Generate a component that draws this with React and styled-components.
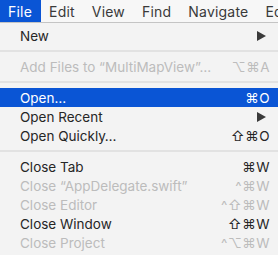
import React from "react";
import styled, { createGlobalStyle } from "styled-components";

const GlobalStyle = createGlobalStyle`
  html, body {
    margin: 0;
    padding: 0;
    background: #f3f3f3;
  }
  body {
    font-family: Inter, "Noto Sans", "DejaVu Sans", sans-serif;
    -webkit-font-smoothing: antialiased;
  }
`;

const Screen = styled.div`
  width: 278px;
  height: 255px;
  overflow: hidden;
  background: #f3f3f3;
`;

const MenuBar = styled.div`
  display: flex;
  height: 22px;
  background: #f7f7f7;
  border-bottom: 1px solid #c4c4c4;
  white-space: nowrap;
  overflow: hidden;
`;

const BarItem = styled.div`
  display: flex;
  align-items: center;
  flex-shrink: 0;
  padding: 0 9px 0 8px;
  height: 22px;
  font-size: 14px;
  letter-spacing: 0.2px;
  color: ${p => (p.$active ? "#fff" : "#3a3a3a")};
  background: ${p => (p.$active ? "#0a55d5" : "transparent")};
`;

const Menu = styled.div`
  display: flex;
  flex-direction: column;
  padding-top: 3px;
`;

const Row = styled.div`
  display: flex;
  align-items: center;
  justify-content: space-between;
  height: 19px;
  padding: 0 8px 0 20px;
  font-size: 13.5px;
  color: ${p => (p.$selected ? "#fff" : p.$disabled ? "#bcbcbc" : "#262626")};
  background: ${p => (p.$selected ? "#0a55d5" : "transparent")};
  white-space: nowrap;
`;

const Shortcut = styled.span`
  letter-spacing: 0.5px;
`;

const Arrow = styled.span`
  width: 0;
  height: 0;
  margin-right: 4px;
  border-top: 5px solid transparent;
  border-bottom: 5px solid transparent;
  border-left: 9px solid #3a3a3a;
`;

const Separator = styled.div`
  height: 12px;
  display: flex;
  align-items: center;

  &::after {
    content: "";
    flex: 1;
    height: 2px;
    background: #e2e2e2;
  }
`;

const menus = ["File", "Edit", "View", "Find", "Navigate", "Ed"];

const items = [
  { label: "New", arrow: true },
  "sep",
  { label: "Add Files to \u201CMultiMapView\u201D\u2026", key: "\u2325\u2318A", disabled: true },
  "sep",
  { label: "Open\u2026", key: "\u2318O", selected: true },
  { label: "Open Recent", arrow: true },
  { label: "Open Quickly\u2026", key: "\u21E7\u2318O" },
  "sep",
  { label: "Close Tab", key: "\u2318W" },
  { label: "Close \u201CAppDelegate.swift\u201D", key: "^\u2318W", disabled: true },
  { label: "Close Editor", key: "^\u21E7\u2318W", disabled: true },
  { label: "Close Window", key: "\u21E7\u2318W" },
  { label: "Close Project", key: "^\u2325\u2318W", disabled: true }
];

const App = () => {
  return (
    <Screen>
      <GlobalStyle />
      <MenuBar>
        {menus.map((m, i) => (
          <BarItem key={m} $active={i === 0}>
            {m}
          </BarItem>
        ))}
      </MenuBar>
      <Menu>
        {items.map((item, i) =>
          item === "sep" ? (
            <Separator key={i} />
          ) : (
            <Row key={i} $selected={item.selected} $disabled={item.disabled}>
              <span>{item.label}</span>
              {item.arrow ? <Arrow /> : <Shortcut>{item.key}</Shortcut>}
            </Row>
          )
        )}
      </Menu>
    </Screen>
  );
};

export default App;
